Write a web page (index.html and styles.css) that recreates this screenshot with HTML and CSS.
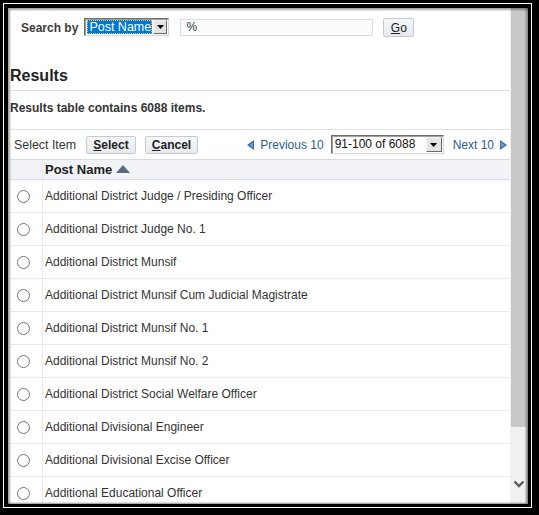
FILE: index.html
```html
<!DOCTYPE html>
<html>
<head>
<meta charset="utf-8">
<link rel="stylesheet" href="styles.css">
</head>
<body>
<div class="frame">
  <div class="window">
    <div class="content">
      <div class="search">
        <span class="lbl">Search by</span>
        <div class="sel sel-search">
          <span class="sel-val"><span class="hl">Post Name</span></span>
          <span class="sel-btn"><svg width="7" height="4" viewBox="0 0 7 4"><path d="M0 0H7L3.5 4Z" fill="#000"/></svg></span>
        </div>
        <div class="input">%</div>
        <button class="btn go"><u>G</u>o</button>
      </div>
      <h2 class="title">Results</h2>
      <p class="count">Results table contains 6088 items.</p>
      <div class="toolbar">
        <div class="tb-left">
          <span class="si">Select Item</span>
          <button class="btn b-sel"><u>S</u>elect</button>
          <button class="btn b-can"><u>C</u>ancel</button>
        </div>
        <div class="pager">
          <svg class="tri" width="7" height="10" viewBox="0 0 7 10"><path d="M7 0V10L0 5Z" fill="#3a6fb0"/><path d="M6 2.5V7.5L2.5 5Z" fill="#6f9bd0"/></svg>
          <span class="plink prev">Previous 10</span>
          <div class="sel sel-page">
            <span class="sel-val2">91-100 of 6088</span>
            <span class="sel-btn"><svg width="7" height="4" viewBox="0 0 7 4"><path d="M0 0H7L3.5 4Z" fill="#000"/></svg></span>
          </div>
          <span class="plink next">Next 10</span>
          <svg class="tri" width="7" height="10" viewBox="0 0 7 10"><path d="M0 0V10L7 5Z" fill="#3a6fb0"/><path d="M1 2.5V7.5L4.5 5Z" fill="#6f9bd0"/></svg>
        </div>
      </div>
      <div class="table">
        <div class="thead">
          <div class="c1"></div>
          <div class="c2">Post Name <svg class="sort" width="14" height="8" viewBox="0 0 14 8"><path d="M7 0L14 8H0Z" fill="#5b6b7c"/></svg></div>
        </div>
        <div class="row"><div class="c1"><span class="radio"></span></div><div class="c2">Additional District Judge / Presiding Officer</div></div>
        <div class="row"><div class="c1"><span class="radio"></span></div><div class="c2">Additional District Judge No. 1</div></div>
        <div class="row"><div class="c1"><span class="radio"></span></div><div class="c2">Additional District Munsif</div></div>
        <div class="row"><div class="c1"><span class="radio"></span></div><div class="c2">Additional District Munsif Cum Judicial Magistrate</div></div>
        <div class="row"><div class="c1"><span class="radio"></span></div><div class="c2">Additional District Munsif No. 1</div></div>
        <div class="row"><div class="c1"><span class="radio"></span></div><div class="c2">Additional District Munsif No. 2</div></div>
        <div class="row"><div class="c1"><span class="radio"></span></div><div class="c2">Additional District Social Welfare Officer</div></div>
        <div class="row"><div class="c1"><span class="radio"></span></div><div class="c2">Additional Divisional Engineer</div></div>
        <div class="row"><div class="c1"><span class="radio"></span></div><div class="c2">Additional Divisional Excise Officer</div></div>
        <div class="row"><div class="c1"><span class="radio"></span></div><div class="c2">Additional Educational Officer</div></div>
      </div>
    </div>
    <div class="scrollbar">
      <div class="thumb"></div>
      <div class="track">
        <svg class="chev" width="12" height="8" viewBox="0 0 12 8"><path d="M1.5 1.5L6 6L10.5 1.5" fill="none" stroke="#5a5a5a" stroke-width="2.4"/></svg>
      </div>
    </div>
  </div>
</div>
</body>
</html>
```
FILE: styles.css
```css
* { box-sizing: border-box; }
html, body { margin: 0; }
body {
  background: #000;
  width: 539px;
  height: 515px;
  padding: 3px 7px 7px 3px;
  font-family: "Liberation Sans", Arial, sans-serif;
  font-size: 12px;
  color: #333;
  overflow: hidden;
}
.frame {
  height: 100%;
  border: 1px solid #fff;
  background: #000;
  padding: 4px 3px 3px 4px;
}
.window {
  height: 100%;
  background: #fff;
  display: flex;
  overflow: hidden;
  position: relative;
}
.window::after {
  content: "";
  position: absolute;
  inset: 0;
  box-shadow: inset 2px 2px 2px rgba(0,0,0,0.35), inset -2px -1px 2px rgba(0,0,0,0.45);
  pointer-events: none;
}
.content {
  flex: 1;
  padding-left: 2px;
  min-width: 0;
}
.search {
  display: flex;
  align-items: center;
  height: 19px;
  margin-top: 10px;
  padding-left: 11px;
}
.lbl { font-weight: bold; color: #3c3c3c; margin-right: 6px; }
.sel {
  display: flex;
  align-items: stretch;
  background: #fff;
  border: 1px solid;
  border-color: #6e6e6e #d8d8d8 #d8d8d8 #6e6e6e;
  box-shadow: inset 1px 1px 0 #a0a0a0;
}
.sel-search {
  width: 85px;
  height: 18px;
  margin-top: -2px;
  margin-right: 11px;
  padding: 1px 1px 1px 2px;
}
.sel-val { flex: 1; display: flex; }
.hl {
  background: #0078d7;
  color: #fff;
  font-size: 12.5px;
  line-height: 14px;
  padding: 0 0 0 2px;
  white-space: nowrap;
  overflow: hidden;
  outline: 1px dotted #e8c050;
  outline-offset: -1px;
  width: 65px;
}
.sel-btn {
  width: 14px;
  background: #e4e4e4;
  border: 1px solid;
  border-color: #f4f4f4 #6a6a6a #6a6a6a #f4f4f4;
  display: flex;
  align-items: center;
  justify-content: center;
}
.input {
  width: 193px;
  height: 17px;
  border: 1px solid #d6dee6;
  background: #f9fbfd;
  padding-left: 5px;
  line-height: 15px;
  color: #333;
  margin-right: 10px;
}
.btn {
  font-family: "Liberation Sans", Arial, sans-serif;
  font-size: 12px;
  color: #222;
  background: linear-gradient(#f5f7f9, #e6eaee);
  border: 1px solid #c3ccd5;
  border-radius: 2px;
  padding: 0;
  margin: 0;
  height: 18px;
  line-height: 16px;
}
.go { width: 31px; height: 19px; }
.title {
  margin: 29px 0 0;
  font-size: 16px;
  line-height: 19px;
  font-weight: bold;
  color: #222;
  padding-bottom: 5px;
  border-bottom: 1px solid #d6e0e8;
}
.count {
  margin: 10px 0 0;
  font-weight: bold;
  line-height: 15px;
  color: #333;
}
.toolbar {
  margin-top: 13px;
  border-top: 1px solid #dde3e8;
  height: 30px;
  display: flex;
  align-items: center;
  justify-content: space-between;
  padding: 0 3px 0 4px;
}
.tb-left { display: flex; align-items: center; }
.si { color: #333; font-size: 12.4px; margin-right: 10px; }
.b-sel { width: 50px; font-weight: bold; margin-right: 9px; }
.b-can { width: 53px; font-weight: bold; }
.pager { display: flex; align-items: center; }
.plink { color: #2a5d98; }
.prev { margin-left: 6px; margin-right: 7px; }
.next { margin-left: 9px; margin-right: 6px; }
.sel-page {
  width: 113px;
  height: 19px;
  padding: 1px 1px 1px 3px;
}
.sel-val2 { flex: 1; color: #111; line-height: 15px; }
.sel-page .sel-btn { width: 16px; }
.thead {
  display: flex;
  height: 21px;
  background: #f1f3f6;
  border-top: 1px solid #d5dce3;
  border-bottom: 1px solid #d5dce3;
}
.thead .c2 {
  font-weight: bold;
  font-size: 13px;
  color: #222;
  display: flex;
  align-items: center;
}
.sort { margin-left: 4px; margin-top: -1px; }
.c1 {
  width: 33px;
  border-right: 1px solid #e6eaee;
  flex: none;
  display: flex;
  align-items: center;
  padding-left: 7px;
}
.c2 {
  padding-left: 2px;
  display: flex;
  align-items: center;
}
.row {
  display: flex;
  height: 33px;
  border-bottom: 1px solid #e8eaec;
}
.row .c2 { color: #333; }
.radio {
  width: 13px;
  height: 13px;
  border: 1px solid #767676;
  border-radius: 50%;
  background: #fff;
  margin-top: 1px;
}
.scrollbar {
  width: 18px;
  flex: none;
  background: #f0f0f0;
  display: flex;
  flex-direction: column;
}
.thumb {
  height: 419px;
  background: #c8c8c8;
  margin: 0 2px 0 1px;
}
.track {
  flex: 1;
  display: flex;
  justify-content: center;
  align-items: flex-end;
  padding-bottom: 16px;
  padding-right: 1px;
}
```
